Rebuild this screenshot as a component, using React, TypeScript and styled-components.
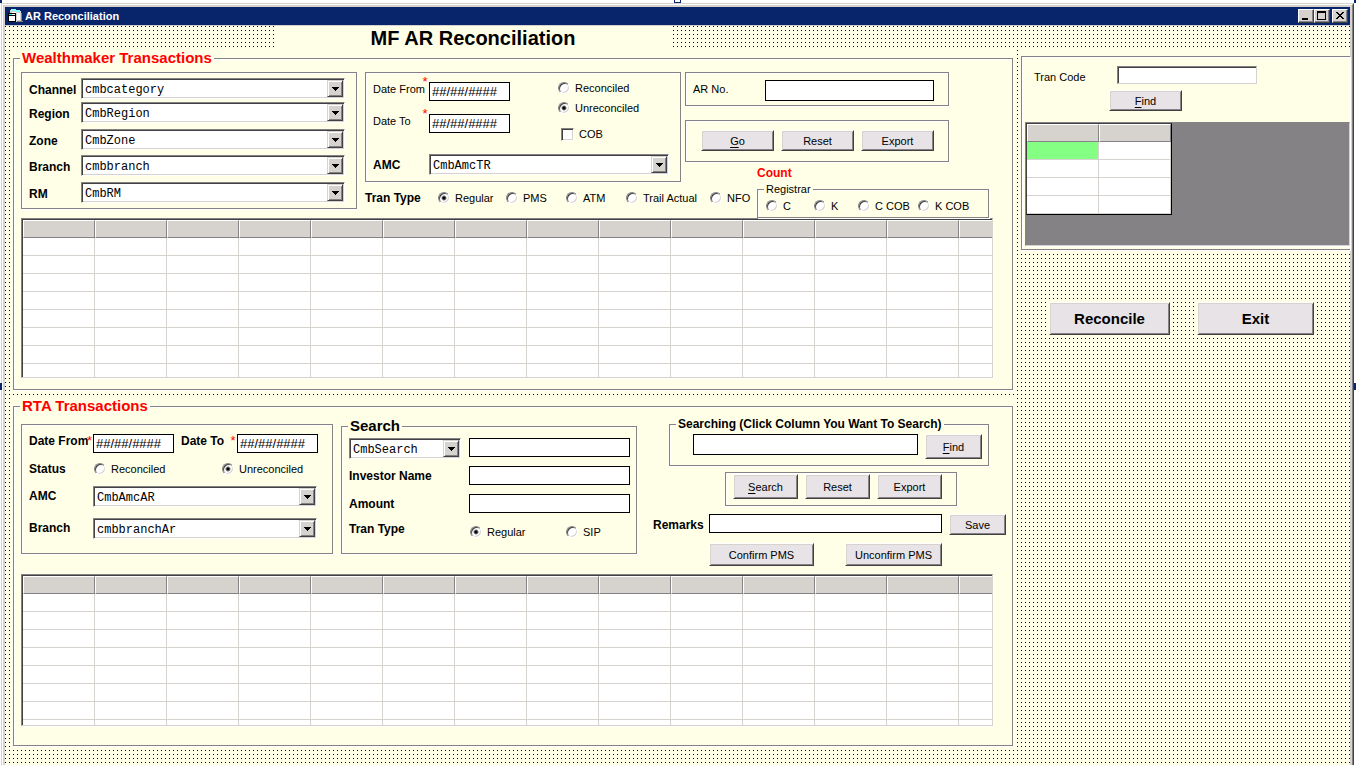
import React, { useId } from "react";
import styled, { createGlobalStyle, css } from "styled-components";

const color = {
  form: "#ffffe7",
  face: "#d6d3ce",
  button: "#e7e3e7",
  shadow: "#848284",
  dark: "#424142",
  title: "#08246b",
  red: "#ff0000",
};

const GlobalStyle = createGlobalStyle`
  *, *::before, *::after { box-sizing: border-box; }
  html, body { margin: 0; background: #fff; }
  body { font: 11px/14px "Liberation Sans", Arial, sans-serif; color: #000; overflow: hidden; }
  input, select, button { font: inherit; color: inherit; margin: 0; border-radius: 0; }
`;

const dots = css`
  background-color: ${color.form};
  background-image: conic-gradient(from 270deg at 1px 1px, #000 90deg, transparent 0);
  background-size: 4px 4px;
`;

/* Window chrome */

const Desktop = styled.div`
  position: relative;
  min-height: 100vh;
  padding: 3px 2px 0 1px;
  display: flex;
`;

const WindowFrame = styled.div`
  flex: 1;
  min-width: 0;
  display: flex;
  border: 1px solid;
  border-color: ${color.face} ${color.dark} ${color.dark} ${color.face};
  border-bottom: 0;
`;

const WindowInner = styled.div`
  flex: 1;
  min-width: 0;
  display: flex;
  flex-direction: column;
  border: 1px solid;
  border-color: #fff ${color.shadow} ${color.shadow} #fff;
  border-bottom: 0;
  padding: 2px 2px 0;
  background: ${color.face};
`;

const TitleBar = styled.header`
  height: 18px;
  display: flex;
  align-items: center;
  padding: 0 2px 0 3px;
  background: ${color.title};
  color: #fff;
  font-weight: bold;
`;

const TitleText = styled.span`
  flex: 1;
  margin-left: 2px;
`;

const CaptionButton = styled.button<{ $gap?: boolean }>`
  width: 16px;
  height: 14px;
  padding: 0;
  display: flex;
  align-items: center;
  justify-content: center;
  margin-left: ${(p) => (p.$gap ? "2px" : "0")};
  border: 1px solid;
  border-color: #fff ${color.dark} ${color.dark} #fff;
  box-shadow: inset -1px -1px 0 ${color.shadow};
  background: ${color.face};
`;

const Handle = styled.i<{ $x: string; $y: string; $w: number; $h: number }>`
  position: absolute;
  left: ${(p) => p.$x};
  top: ${(p) => p.$y};
  width: ${(p) => p.$w}px;
  height: ${(p) => p.$h}px;
  border: 1px solid ${color.title};
  border-top-width: ${(p) => (p.$y === "0" ? 0 : 1)}px;
  background: #fff;
`;

const FormSurface = styled.main`
  ${dots}
  flex: 1;
  margin-top: 1px;
`;

const Heading = styled.h1`
  width: 396px;
  margin: 0 0 0 270px;
  background: ${color.form};
  font-size: 20px;
  line-height: 24px;
  font-weight: bold;
  text-align: center;
`;

const Columns = styled.div`
  display: grid;
  grid-template-columns: minmax(1001px, 3fr) minmax(328px, 1fr);
  column-gap: 7px;
  padding-left: 8px;
`;

const LeftColumn = styled.div`
  display: flex;
  flex-direction: column;
  gap: 7px;
`;

/* Frames */

const Panel = styled.section`
  padding: 0 1px 1px 0;
  background: ${color.form};
`;

const etched = css`
  border: 1px solid ${color.shadow};
  box-shadow: 1px 1px 0 #fff, inset 1px 1px 0 #fff;
`;

const Group = styled.fieldset<{ $width?: number }>`
  ${etched}
  min-width: 0;
  margin: 0;
  padding: 0;
  width: ${(p) => (p.$width ? `${p.$width}px` : "auto")};
`;

const Legend = styled.legend<{ $kind?: "section" | "search" | "small" }>`
  margin-left: 6px;
  padding: 0 2px;
  background: ${color.form};
  font-weight: bold;
  font-size: 12px;
  line-height: 14px;
  ${(p) => p.$kind === "section" && css`font-size: 15px; line-height: 16px; color: ${color.red};`}
  ${(p) => p.$kind === "search" && css`font-size: 15px; line-height: 16px;`}
  ${(p) => p.$kind === "small" && css`font-size: 11px; font-weight: normal;`}
`;

const Box = styled.div<{ $width: number; $pad: string }>`
  ${etched}
  width: ${(p) => p.$width}px;
  padding: ${(p) => p.$pad};
`;

const PanelBody = styled.div<{ $pad: string }>`
  padding: ${(p) => p.$pad};
`;

const Filters = styled.div<{ $height: number }>`
  display: flex;
  align-items: flex-start;
  gap: 8px;
  min-height: ${(p) => p.$height}px;
`;

const Stack = styled.div<{ $gap?: number; $top?: number }>`
  display: flex;
  flex-direction: column;
  align-items: flex-start;
  gap: ${(p) => p.$gap ?? 0}px;
  padding-top: ${(p) => p.$top ?? 0}px;
`;

const Line = styled.div<{ $gap?: number; $pad?: string; $align?: string }>`
  display: flex;
  align-items: ${(p) => p.$align ?? "center"};
  gap: ${(p) => p.$gap ?? 0}px;
  padding: ${(p) => p.$pad ?? "0"};
`;

const Tracks = styled.div<{ $cols: string; $rows?: string; $pad?: string; $align?: string }>`
  display: grid;
  grid-template-columns: ${(p) => p.$cols};
  grid-template-rows: ${(p) => p.$rows ?? "auto"};
  align-items: ${(p) => p.$align ?? "start"};
  padding: ${(p) => p.$pad ?? "0"};
`;

const TransactionFilters = styled.div`
  display: grid;
  grid-template-columns: 320px 72px 232px;
  grid-template-rows: 110px 36px;
  align-items: start;
`;

const ActionArea = styled.div`
  grid-column: 2 / 4;
`;

const TranTypeArea = styled.div`
  grid-column: 1 / 3;
  padding-top: 9px;
`;

const CountLabel = styled.strong`
  display: block;
  margin: 4px 0 0 72px;
  font-size: 12px;
  color: ${color.red};
`;

/* Controls */

const Caption = styled.label<{ $bold?: boolean; $top?: number }>`
  white-space: nowrap;
  font-size: ${(p) => (p.$bold ? "12px" : "11px")};
  font-weight: ${(p) => (p.$bold ? "bold" : "normal")};
  padding-top: ${(p) => p.$top ?? 0}px;
`;

const Required = styled.span`
  color: ${color.red};
  font-size: 13px;
  text-align: center;
`;

const TextBox = styled.input<{ $width: number; $height?: number; $sunken?: boolean }>`
  width: ${(p) => p.$width}px;
  height: ${(p) => p.$height ?? 19}px;
  padding: 0 2px;
  border: 1px solid #000;
  background: #fff;
  font-size: 13px;
  outline: none;
  ${(p) =>
    p.$sunken &&
    css`
      border-color: ${color.shadow} ${color.face} ${color.face} ${color.shadow};
      box-shadow: inset 1px 1px 0 ${color.dark};
    `}
`;

const PushButton = styled.button<{ $width: number; $height?: number; $large?: boolean }>`
  width: ${(p) => p.$width}px;
  height: ${(p) => p.$height ?? 21}px;
  padding: 0;
  border: 1px solid;
  border-color: #fff ${color.dark} ${color.dark} #fff;
  box-shadow: inset 1px 1px 0 ${color.face}, inset -1px -1px 0 ${color.shadow};
  background: ${color.button};
  white-space: nowrap;
  ${(p) => p.$large && css`font-size: 15px; font-weight: bold;`}
`;

const ComboWrap = styled.span<{ $width: number }>`
  display: grid;
  grid-template-columns: minmax(0, 1fr) 16px;
  width: ${(p) => p.$width}px;
  height: 21px;
  border: 1px solid;
  border-color: ${color.shadow} #fff #fff ${color.shadow};
  box-shadow: inset 1px 1px 0 ${color.dark}, inset -1px -1px 0 ${color.face};
  background: #fff;
  padding: 1px;
`;

const ComboSelect = styled.select`
  grid-area: 1 / 1 / 2 / 3;
  appearance: none;
  border: 0;
  padding: 3px 18px 0 2px;
  background: transparent;
  font: 12px/14px "Liberation Mono", "Courier New", monospace;
  outline: none;
`;

const ComboArrow = styled.span`
  grid-area: 1 / 2;
  display: flex;
  align-items: center;
  justify-content: center;
  pointer-events: none;
  background: ${color.face};
  border: 1px solid;
  border-color: ${color.face} ${color.dark} ${color.dark} ${color.face};
  box-shadow: inset 1px 1px 0 #fff, inset -1px -1px 0 ${color.shadow};
`;

const Choice = styled.label<{ $indent?: number }>`
  display: inline-flex;
  align-items: center;
  gap: 5px;
  height: 14px;
  white-space: nowrap;
  padding-left: ${(p) => p.$indent ?? 0}px;
`;

const RadioInput = styled.input`
  appearance: none;
  width: 12px;
  height: 12px;
  border: 1px solid;
  border-color: ${color.shadow} #fff #fff ${color.shadow};
  border-radius: 50%;
  background: #fff;
  box-shadow: inset 1px 1px 0 ${color.dark}, inset -1px -1px 0 ${color.face};
  &:checked {
    background: radial-gradient(circle, #000 1px, #fff 3px);
  }
`;

const CheckInput = styled.input`
  appearance: none;
  width: 13px;
  height: 13px;
  border: 1px solid;
  border-color: ${color.shadow} #fff #fff ${color.shadow};
  background: #fff;
  box-shadow: inset 1px 1px 0 ${color.dark}, inset -1px -1px 0 ${color.face};
`;

const Key = styled.u`
  text-underline-offset: 2px;
`;

/* Data grids */

const GridViewport = styled.div<{ $height: number; $fill: string }>`
  height: ${(p) => p.$height}px;
  overflow: hidden;
  border: 1px solid;
  border-color: ${color.shadow} ${color.face} ${color.face} ${color.shadow};
  box-shadow: 1px 1px 0 #fff;
  background: ${(p) => p.$fill};
`;

const GridTable = styled.table<{ $columns: number; $outlined?: boolean }>`
  width: ${(p) => p.$columns * 72 + (p.$outlined ? 2 : 1)}px;
  table-layout: fixed;
  border-collapse: separate;
  border-spacing: 0;
  border-top: 1px solid ${color.dark};
  border-left: 1px solid ${color.dark};
  ${(p) =>
    p.$outlined &&
    css`
      border-right: 1px solid #000;
      border-bottom: 1px solid #000;
    `}
`;

const HeadCell = styled.th`
  height: 18px;
  padding: 0;
  background: ${color.face};
  border: 1px solid;
  border-color: #fff ${color.shadow} ${color.shadow} #fff;
`;

const Cell = styled.td<{ $active?: boolean }>`
  height: 18px;
  padding: 0;
  background: ${(p) => (p.$active ? "#84ff84" : "#fff")};
  border: 0 solid ${color.face};
  border-width: 0 1px 1px 0;
`;

/* Side column */

const SidePanel = styled.section`
  padding: 6px 0 1px;
  background: ${color.form};
`;

const SideFrame = styled.div`
  ${etched}
  border-right: 0;
  padding: 9px 0 3px 3px;
`;

const SideActions = styled.div`
  display: flex;
  gap: 27px;
  padding: 51px 0 0 28px;
`;

const range = (n: number) => Array.from({ length: n }, (_, i) => i);

function Combo({ id, value, width }: { id: string; value: string; width: number }) {
  return (
    <ComboWrap $width={width}>
      <ComboSelect id={id} aria-label={value} defaultValue={value}>
        <option>{value}</option>
      </ComboSelect>
      <ComboArrow aria-hidden>
        <svg width="7" height="4" shapeRendering="crispEdges">
          <path d="M0 0h7v1h-1v1h-1v1h-1v1h-1v-1h-1v-1h-1v-1h-1z" />
        </svg>
      </ComboArrow>
    </ComboWrap>
  );
}

function Radio({ name, label, checked }: { name: string; label: string; checked?: boolean }) {
  return (
    <Choice>
      <RadioInput type="radio" name={name} defaultChecked={checked} />
      {label}
    </Choice>
  );
}

function DataGrid(props: { columns: number; rows: number; height: number; active?: boolean }) {
  const { columns, rows, height, active } = props;
  return (
    <GridViewport $height={height} $fill={active ? color.shadow : "#fff"}>
      <GridTable $columns={columns} $outlined={active}>
        <thead>
          <tr>{range(columns).map((c) => <HeadCell key={c} />)}</tr>
        </thead>
        <tbody>
          {range(rows).map((r) => (
            <tr key={r}>
              {range(columns).map((c) => (
                <Cell key={c} $active={active && r === 0 && c === 0} />
              ))}
            </tr>
          ))}
        </tbody>
      </GridTable>
    </GridViewport>
  );
}

function FormIcon() {
  return (
    <svg width="15" height="15" viewBox="0 0 15 15" shapeRendering="crispEdges" aria-hidden>
      <path d="M2 1h6v1h5v9h1v2H8v-1H2z" fill="#d6d3ce" />
      <path d="M3 0h5v1h4v2H8V2H3z" fill="#84ffff" />
      <path d="M4 3h4v1h4v7H9V4H4z" fill="#fff" />
      <path d="M13 4h1v8h1v1H9v-1h4z" fill="#848284" />
      <path d="M0 4h8v9H0z" fill="#000" />
      <path d="M1 5h6v1H1z" fill="#00f3ff" />
      <path d="M1 7h6v5H1z" fill="#fff" />
      <path d="M4 5h3v1H4z" fill="#fff" />
    </svg>
  );
}

const locations = [
  ["Channel", "cmbcategory"],
  ["Region", "CmbRegion"],
  ["Zone", "CmbZone"],
  ["Branch", "cmbbranch"],
  ["RM", "CmbRM"],
];

function WealthmakerPanel() {
  const id = useId();
  return (
    <Panel>
      <Group>
        <Legend $kind="section">Wealthmaker Transactions</Legend>
        <PanelBody $pad="6px 19px 11px 7px">
          <Filters $height={146}>
            <Box $width={336} $pad="5px 0 5px 7px">
              <Tracks $cols="52px 264px" $rows="24px 27px 26px 27px 21px">
                {locations.map(([label, value]) => (
                  <React.Fragment key={label}>
                    <Caption $bold $top={5} htmlFor={id + label}>{label}</Caption>
                    <Combo id={id + label} value={value} width={264} />
                  </React.Fragment>
                ))}
              </Tracks>
            </Box>
            <TransactionFilters>
              <Box $width={316} $pad="2px 0 6px 7px">
                <Line $align="flex-start">
                  <Tracks $cols="48px 8px 129px" $rows="32px 47px">
                    <Caption $top={7} htmlFor={id + "from"}>Date From</Caption>
                    <Required>*</Required>
                    <Line $pad="7px 0 0">
                      <TextBox id={id + "from"} $width={81} defaultValue="##/##/####" />
                    </Line>
                    <Caption $top={7} htmlFor={id + "to"}>Date To</Caption>
                    <Required>*</Required>
                    <Line $pad="7px 0 0">
                      <TextBox id={id + "to"} $width={81} defaultValue="##/##/####" />
                    </Line>
                  </Tracks>
                  <Stack $gap={6} $top={6}>
                    <Radio name="status" label="Reconciled" />
                    <Radio name="status" label="Unreconciled" checked />
                    <Line $pad="6px 0 0">
                      <Choice $indent={3}>
                        <CheckInput type="checkbox" />
                        COB
                      </Choice>
                    </Line>
                  </Stack>
                </Line>
                <Tracks $cols="56px 240px" $align="center">
                  <Caption $bold htmlFor={id + "amc"}>AMC</Caption>
                  <Combo id={id + "amc"} value="CmbAmcTR" width={240} />
                </Tracks>
              </Box>
              <ActionArea>
                <Stack $gap={14}>
                  <Box $width={264} $pad="7px 0 4px 7px">
                    <Tracks $cols="72px 169px">
                      <Caption $top={2} htmlFor={id + "ar"}>AR No.</Caption>
                      <TextBox id={id + "ar"} $width={169} $height={21} />
                    </Tracks>
                  </Box>
                  <Box $width={264} $pad="9px 0 10px 15px">
                    <Line $gap={7}>
                      <PushButton $width={73}><Key>G</Key>o</PushButton>
                      <PushButton $width={73}>Reset</PushButton>
                      <PushButton $width={73}>Export</PushButton>
                    </Line>
                  </Box>
                </Stack>
                <CountLabel>Count</CountLabel>
              </ActionArea>
              <TranTypeArea>
                <Tracks $cols="73px 68px 60px 60px 84px auto" role="radiogroup">
                  <Caption as="span" $bold>Tran Type</Caption>
                  <Radio name="tran" label="Regular" checked />
                  <Radio name="tran" label="PMS" />
                  <Radio name="tran" label="ATM" />
                  <Radio name="tran" label="Trail Actual" />
                  <Radio name="tran" label="NFO" />
                </Tracks>
              </TranTypeArea>
              <Group $width={232}>
                <Legend $kind="small">Registrar</Legend>
                <Tracks $cols="48px 44px 60px auto" $pad="3px 0 4px 8px">
                  <Radio name="registrar" label="C" />
                  <Radio name="registrar" label="K" />
                  <Radio name="registrar" label="C COB" />
                  <Radio name="registrar" label="K COB" />
                </Tracks>
              </Group>
            </TransactionFilters>
          </Filters>
          <DataGrid columns={14} rows={8} height={160} />
        </PanelBody>
      </Group>
    </Panel>
  );
}

function RtaPanel() {
  const id = useId();
  return (
    <Panel>
      <Group>
        <Legend $kind="section">RTA Transactions</Legend>
        <PanelBody $pad="3px 5px 19px 7px">
          <Filters $height={157}>
            <Stack $top={7}>
              <Box $width={312} $pad="9px 0 14px 7px">
                <Tracks $cols="57px 7px 88px 48px 8px 81px" $rows="28px">
                  <Caption $bold htmlFor={id + "from"}>Date From</Caption>
                  <Required>*</Required>
                  <TextBox id={id + "from"} $width={81} defaultValue="##/##/####" />
                  <Caption $bold htmlFor={id + "to"}>Date To</Caption>
                  <Required>*</Required>
                  <TextBox id={id + "to"} $width={81} defaultValue="##/##/####" />
                </Tracks>
                <Tracks $cols="65px 128px auto" $rows="24px">
                  <Caption as="span" $bold>Status</Caption>
                  <Radio name="rta-status" label="Reconciled" />
                  <Radio name="rta-status" label="Unreconciled" checked />
                </Tracks>
                <Tracks $cols="64px 224px" $rows="32px 21px">
                  <Caption $bold $top={3} htmlFor={id + "amc"}>AMC</Caption>
                  <Combo id={id + "amc"} value="CmbAmcAR" width={224} />
                  <Caption $bold $top={3} htmlFor={id + "branch"}>Branch</Caption>
                  <Combo id={id + "branch"} value="cmbbranchAr" width={224} />
                </Tracks>
              </Box>
            </Stack>
            <Stack $top={1}>
              <Group $width={296}>
                <Legend $kind="search">Search</Legend>
                <Tracks $cols="120px 161px" $rows="28px 28px 28px 31px" $pad="4px 0 0 7px">
                  <Combo id={id + "field"} value="CmbSearch" width={112} />
                  <TextBox aria-label="Search value" $width={161} />
                  <Caption $bold $top={3} htmlFor={id + "name"}>Investor Name</Caption>
                  <TextBox id={id + "name"} $width={161} />
                  <Caption $bold $top={3} htmlFor={id + "amount"}>Amount</Caption>
                  <TextBox id={id + "amount"} $width={161} />
                  <Caption as="span" $bold>Tran Type</Caption>
                  <Tracks $cols="96px auto" $pad="3px 0 0 1px">
                    <Radio name="rta-tran" label="Regular" checked />
                    <Radio name="rta-tran" label="SIP" />
                  </Tracks>
                </Tracks>
              </Group>
            </Stack>
            <Line $pad="0 0 0 8px">
              <Stack>
                <Line $pad="0 0 6px 16px">
                  <Group $width={320}>
                    <Legend>Searching (Click Column You Want To Search)</Legend>
                    <Line $gap={7} $align="flex-start" $pad="3px 0 6px 23px">
                      <TextBox aria-label="Column search" $width={225} $height={21} />
                      <PushButton $width={57} $height={25}><Key>F</Key>ind</PushButton>
                    </Line>
                  </Group>
                </Line>
                <Line $pad="0 0 8px 72px">
                  <Box $width={232} $pad="1px 0 6px 7px">
                    <Line $gap={7}>
                      <PushButton $width={65} $height={25}><Key>S</Key>earch</PushButton>
                      <PushButton $width={65} $height={25}>Reset</PushButton>
                      <PushButton $width={65} $height={25}>Export</PushButton>
                    </Line>
                  </Box>
                </Line>
                <Tracks $cols="56px 240px 57px" $rows="29px">
                  <Caption $bold $top={4} htmlFor={id + "remarks"}>Remarks</Caption>
                  <TextBox id={id + "remarks"} $width={233} />
                  <PushButton $width={57}>Save</PushButton>
                </Tracks>
                <Line $gap={31} $pad="0 0 0 56px">
                  <PushButton $width={105} $height={23}>Confirm PMS</PushButton>
                  <PushButton $width={97} $height={23}>Unconfirm PMS</PushButton>
                </Line>
              </Stack>
            </Line>
          </Filters>
          <PanelBody $pad="0 14px 0 0">
            <DataGrid columns={14} rows={8} height={152} />
          </PanelBody>
        </PanelBody>
      </Group>
    </Panel>
  );
}

function SideColumn() {
  return (
    <aside>
      <SidePanel>
        <SideFrame>
          <Tracks $cols="83px auto" $rows="24px" $align="start" $pad="0 0 0 9px">
            <Caption $top={4} htmlFor="tran-code">Tran Code</Caption>
            <TextBox id="tran-code" $sunken $width={140} $height={18} />
          </Tracks>
          <Line $pad="0 0 11px 84px">
            <PushButton $width={73}><Key>F</Key>ind</PushButton>
          </Line>
          <DataGrid columns={2} rows={4} height={124} active />
        </SideFrame>
      </SidePanel>
      <SideActions>
        <PushButton $large $width={121} $height={33}>Reconcile</PushButton>
        <PushButton $large $width={117} $height={33}>Exit</PushButton>
      </SideActions>
    </aside>
  );
}

export default function App() {
  return (
    <Desktop>
      <GlobalStyle />
      <WindowFrame>
        <WindowInner>
          <TitleBar>
            <FormIcon />
            <TitleText>AR Reconciliation</TitleText>
            <CaptionButton aria-label="Minimize">
              <svg width="12" height="10" shapeRendering="crispEdges"><path d="M2 7h6v2H2z" /></svg>
            </CaptionButton>
            <CaptionButton aria-label="Maximize">
              <svg width="12" height="10" shapeRendering="crispEdges">
                <path d="M1 0h9v9H1zM2 2v6h7V2z" fillRule="evenodd" />
              </svg>
            </CaptionButton>
            <CaptionButton $gap aria-label="Close">
              <svg width="12" height="10" shapeRendering="crispEdges">
                <path d="M2 1h2v1h1v1h2V2h1V1h2v1H9v1H8v1H7v1h1v1h1v1h1v1H8V7H7V6H5v1H4v1H2V7h1V6h1V5h1V4H4V3H3V2H2z" />
              </svg>
            </CaptionButton>
          </TitleBar>
          <FormSurface>
            <Heading>MF AR Reconciliation</Heading>
            <Columns>
              <LeftColumn>
                <WealthmakerPanel />
                <RtaPanel />
              </LeftColumn>
              <SideColumn />
            </Columns>
          </FormSurface>
        </WindowInner>
      </WindowFrame>
      <Handle $x="0" $y="0" $w={1} $h={3} />
      <Handle $x="calc(50% - 4px)" $y="0" $w={7} $h={3} />
      <Handle $x="calc(100% - 2px)" $y="0" $w={2} $h={3} />
      <Handle $x="0" $y="50%" $w={1} $h={7} />
      <Handle $x="calc(100% - 2px)" $y="50%" $w={2} $h={7} />
    </Desktop>
  );
}
